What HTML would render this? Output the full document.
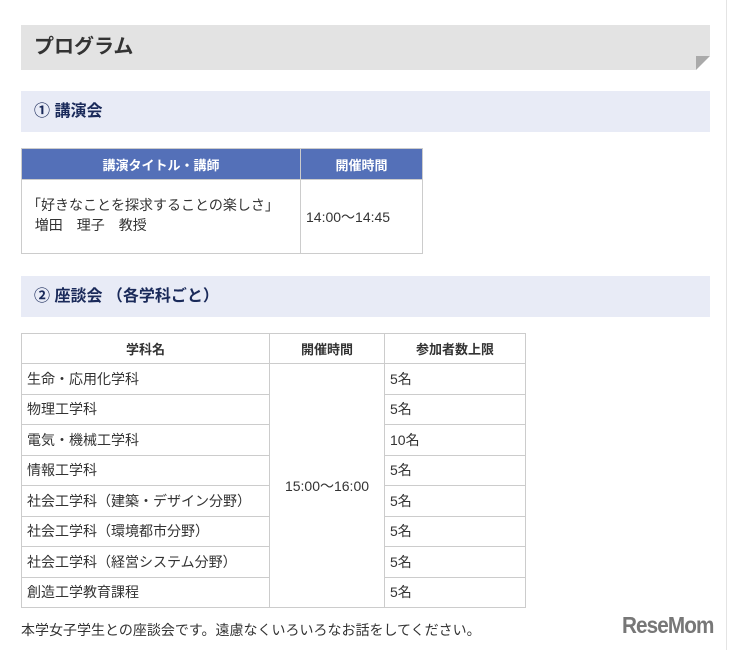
<!DOCTYPE html><html><head><meta charset="utf-8"><style>
body{margin:0;width:733px;height:650px;background:#fff;font-family:"Liberation Sans","Noto Sans CJK JP",sans-serif;color:#333;position:relative;overflow:hidden}
.edge{position:absolute;left:726px;top:0;width:1px;height:650px;background:#e4e4e4}
.h{position:absolute;left:21px;top:25px;width:689px;height:45px;background:#e3e3e3;font-size:20px;font-weight:bold;line-height:45px;text-indent:13px;color:#333}
.h:after{content:"";position:absolute;right:0;bottom:0;border-style:solid;border-width:0 0 14px 14px;border-color:transparent transparent #fff #aaa}
.s{position:absolute;left:21px;width:689px;height:41px;background:#e8ebf6;font-size:16px;font-weight:bold;color:#1a2a5a;line-height:41px;text-indent:13px}
table{position:absolute;border-collapse:collapse;font-size:14px}
td,th{border:1px solid #ccc;padding:0 5px}
.t1 th{background:#5470b8;color:#fff;height:30px;font-size:13px}
.t2 th{font-size:13px;height:29px;color:#333}
.t2 td{height:29.5px}
.f{position:absolute;left:21px;top:620px;font-size:14px}
.logo{position:absolute;left:622px;top:612px;font-size:23px;font-weight:bold;color:#777;letter-spacing:-1px;transform:scaleX(.9);transform-origin:left}
</style></head><body>
<div class="edge"></div>
<div class="h">プログラム</div>
<div class="s" style="top:91px">① 講演会</div>
<table class="t1" style="left:21px;top:148px;width:402px">
<tr><th style="width:268px">講演タイトル・講師</th><th>開催時間</th></tr>
<tr><td style="height:74px;line-height:20px;padding-bottom:4px;box-sizing:border-box">「好きなことを探求することの楽しさ」<br>&nbsp; 増田　理子　教授</td><td>14:00～14:45</td></tr></table>
<div class="s" style="top:276px">② 座談会 （各学科ごと）</div>
<table class="t2" style="left:21px;top:333px;width:505px">
<tr><th style="width:237px">学科名</th><th style="width:104px">開催時間</th><th>参加者数上限</th></tr>
<tr><td>生命・応用化学科</td><td rowspan="8" style="text-align:center">15:00～16:00</td><td>5名</td></tr>
<tr><td>物理工学科</td><td>5名</td></tr>
<tr><td>電気・機械工学科</td><td>10名</td></tr>
<tr><td>情報工学科</td><td>5名</td></tr>
<tr><td>社会工学科（建築・デザイン分野）</td><td>5名</td></tr>
<tr><td>社会工学科（環境都市分野）</td><td>5名</td></tr>
<tr><td>社会工学科（経営システム分野）</td><td>5名</td></tr>
<tr><td>創造工学教育課程</td><td>5名</td></tr></table>
<div class="f">本学女子学生との座談会です。遠慮なくいろいろなお話をしてください。</div>
<div class="logo">ReseMom</div>
</body></html>
